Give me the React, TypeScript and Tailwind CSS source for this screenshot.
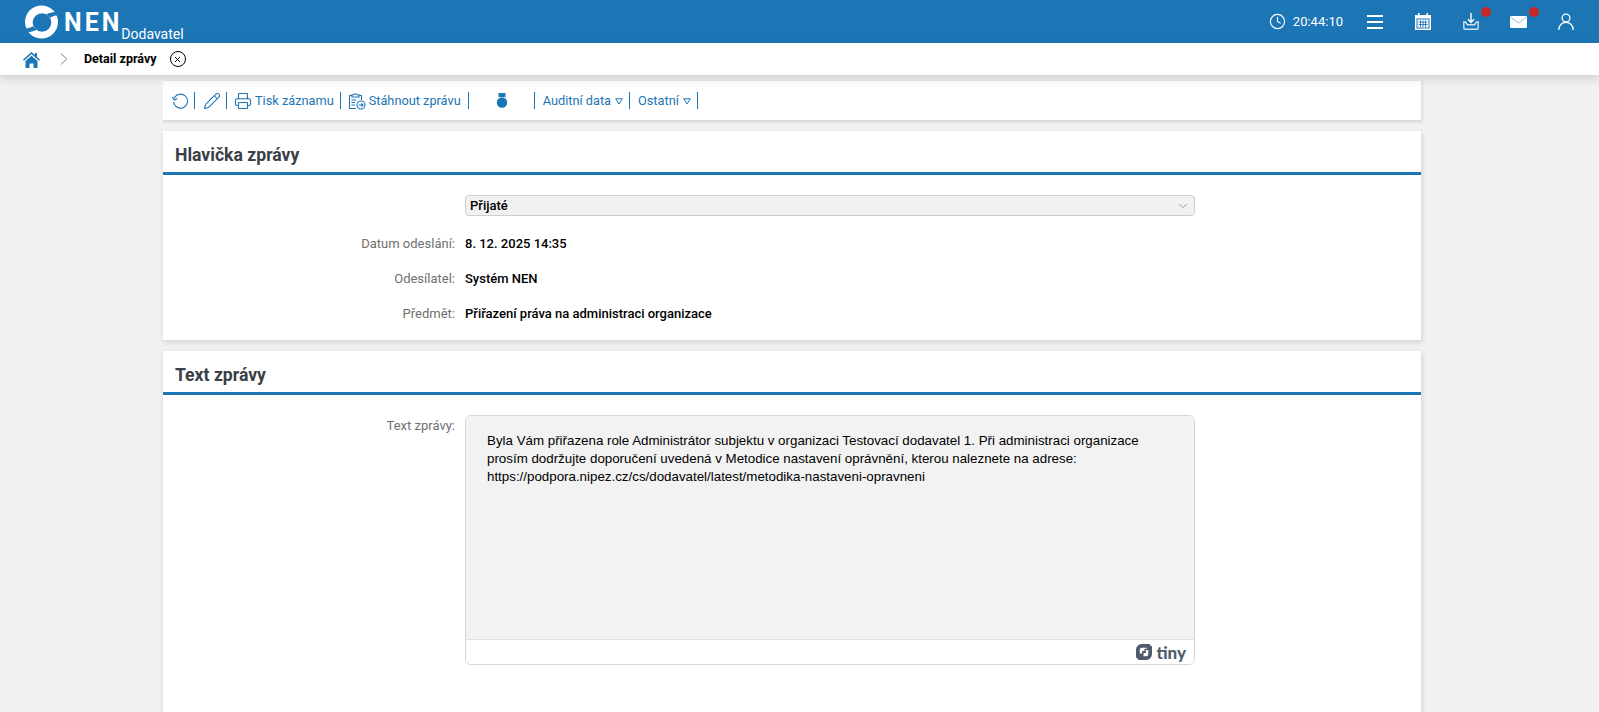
import React from 'react'
import { Clock, Pencil, Printer, ChevronDown, X } from 'lucide-react'

const FONT = 'font-["Roboto",sans-serif]'

function Sep() {
  return <span className="mx-[5px] h-[17px] w-px bg-[#1c75b5]" />
}

function Caret() {
  return (
    <svg width="8" height="7" viewBox="0 0 8 7" className="ml-[4px] mr-px mt-px">
      <path d="M.7.8h6.6L4 6z" fill="none" stroke="#1c75b5" strokeWidth="1" />
    </svg>
  )
}

function Logo() {
  return (
    <svg width="33" height="34" viewBox="0 0 34 34">
      <circle cx="17" cy="17" r="17" fill="#fff" />
      <circle cx="17.5" cy="17.5" r="9.6" fill="#1c75b5" />
      <path d="M36 7C31 6 26 7 22 9L26 12.5C29 10.5 32 10 36 10.5Z" fill="#1c75b5" />
      <path d="M-2 27C3 28 8 27 12 25L8 21.5C5 23.5 2 24 -2 23.5Z" fill="#1c75b5" />
    </svg>
  )
}

function Header() {
  return (
    <header className="flex h-[43px] items-center bg-[#1c75b5] text-white">
      <div className="ml-[25px] flex items-center">
        <Logo />
        <span className="ml-[6px] mt-px text-[25px] font-bold leading-none tracking-[3px]">NEN</span>
        <span className="-ml-px mt-[24px] text-[14px] leading-none">Dodavatel</span>
      </div>
      <div className="ml-auto flex items-center">
        <Clock className="h-[17px] w-[17px]" strokeWidth={1.6} />
        <span className="ml-[7px] text-[13px]">20:44:10</span>
        <svg width="16" height="14" viewBox="0 0 16 14" className="ml-[24px]">
          <path d="M0 0h16v2H0zM0 6h16v2H0zM0 12h16v2H0z" fill="#fff" />
        </svg>
        <svg width="16" height="17" viewBox="0 0 16 17" className="ml-[32px]">
          <path d="M0 2h16v15H0z M3 0h1.6v4H3z M11.4 0H13v4h-1.6z" fill="#fff" />
          <path d="M1.5 5.5h13v10h-13z" fill="#1c75b5" />
          <path d="M2.5 6.5h11v8h-11z" fill="#fff" />
          <path d="M3.5 9h9M3.5 11.5h9M5.5 7.5v6.5M8 7.5v6.5M10.5 7.5v6.5" stroke="#1c75b5" strokeWidth=".9" />
        </svg>
        <div className="relative ml-[32px] h-[17px] w-[16px]">
          <svg width="16" height="17" viewBox="0 0 16 17" fill="none" strokeWidth="1.4">
            <path d="M8 0v9M5 6.2 8 9.4l3-3.2" stroke="#fff" />
            <path d="M2.6 9H.8v6c0 .8.6 1.3 1.3 1.3h11.8c.7 0 1.3-.5 1.3-1.3V9h-1.8l-1.8 2.8H4.4z" stroke="#cfe3f2" />
          </svg>
          <span className="absolute left-[18px] top-[-6px] h-[10px] w-[10px] rounded-full bg-[#c62828]" />
        </div>
        <div className="relative ml-[31px] h-[12px] w-[17px]">
          <svg width="17" height="12" viewBox="0 0 17 12" className="block">
            <rect width="17" height="12" rx="1.2" fill="#fff" />
            <path d="M.5 1 8.5 7 16.5 1" fill="none" stroke="#8fbfe0" strokeWidth="1" />
          </svg>
          <span className="absolute left-[19px] top-[-9px] h-[10px] w-[10px] rounded-full bg-[#c62828]" />
        </div>
        <svg width="16" height="17" viewBox="0 0 16 17" fill="none" stroke="#fff" strokeWidth="1.3" className="ml-[31px] mr-[25px]">
          <circle cx="8" cy="5" r="3.9" />
          <path d="M.8 17c0-4.4 3-7.6 7.2-7.6s7.2 3.2 7.2 7.6" />
        </svg>
      </div>
    </header>
  )
}

function Breadcrumb() {
  return (
    <nav className="relative z-10 flex h-[32px] items-center bg-white shadow-[0_3px_10px_rgba(0,0,0,0.16)]">
      <svg width="17" height="17" viewBox="0 0 17 17" className="ml-[23px]">
        <path d="M8.5 1 0 8.6l1 1.1 7.5-6.6L16 9.7l1-1.1-3-2.7V2h-2v2.1z" fill="#1c75b5" />
        <path d="M2.5 10 8.5 4.7 14.5 10v7h-4v-4.5h-4V17h-4z" fill="#1c75b5" />
      </svg>
      <svg width="8" height="12" viewBox="0 0 8 12" fill="none" stroke="#6f8190" strokeWidth="1" className="ml-[20px]">
        <path d="M.8.5 6.8 6l-6 5.5" />
      </svg>
      <span className="ml-[16px] text-[12.5px] font-bold text-black">Detail zprávy</span>
      <span className="ml-[13px] flex h-[16px] w-[16px] items-center justify-center rounded-full border-[1.4px] border-black">
        <X className="h-[9px] w-[9px] text-black" strokeWidth={2.6} />
      </span>
    </nav>
  )
}

function Toolbar() {
  return (
    <div className="flex h-[41px] items-center border-b-2 border-[#dcdcdc] bg-white pl-[9px] text-[12.75px] text-[#1c75b5] shadow-[2px_0_3px_rgba(0,0,0,0.08)]">
      <svg width="17" height="17" viewBox="0 0 17 17" fill="none" stroke="#1c75b5" strokeWidth="1.1">
        <path d="M2.2 6.2A7 7 0 1 1 1.6 10" />
        <path d="M.4 4.8 2.2 8 5.4 6.4" />
      </svg>
      <Sep />
      <Pencil className="ml-[3px] h-[18px] w-[18px]" strokeWidth={1.4} />
      <Sep />
      <Printer className="ml-[2px] h-[18px] w-[18px]" strokeWidth={1.5} />
      <span className="ml-[3px] mr-px">Tisk záznamu</span>
      <Sep />
      <svg width="18" height="18" viewBox="0 0 18 18" fill="none" stroke="#1c75b5" strokeWidth="1.1" className="ml-[2px]">
        <path d="M8 16.5H1.5V3.5H4M11 3.5h2.5V8" />
        <path d="M4 5V2.8h2C6.2 1.4 8.8 1.4 9 2.8h2V5z" />
        <path d="M3.5 8H8M3.5 10.5H7M3.5 13H7" />
        <circle cx="13" cy="13" r="4" />
        <path d="M10.8 13h4.2M13.4 11.3 15 13l-1.6 1.7" />
      </svg>
      <span className="ml-[3px] mr-[2px]">Stáhnout zprávu</span>
      <Sep />
      <svg width="12" height="15" viewBox="0 0 12 15" className="ml-[22px] mr-[21px]">
        <path d="M2.5 0h7v4h-7z" fill="#1c75b5" />
        <circle cx="6" cy="9.5" r="5.2" fill="#1c75b5" />
      </svg>
      <Sep />
      <span className="ml-[3px]">Auditní data</span>
      <Caret />
      <Sep />
      <span className="ml-[3px]">Ostatní</span>
      <Caret />
      <Sep />
    </div>
  )
}

function Title({ children }: { children: React.ReactNode }) {
  return (
    <h2 className="flex h-[44px] items-center border-b-[3px] border-[#1c75b5] pl-[12px] pt-[8px] text-[17.6px] font-bold text-[#3a3f47]">
      {children}
    </h2>
  )
}

function Row({ label, value }: { label: string; value: string }) {
  return (
    <div className="grid h-[35px] grid-cols-[292px_1fr] items-center gap-x-[10px] text-[13px]">
      <span className="text-right text-[#6f6f6f]">{label}</span>
      <span className="font-medium text-black">{value}</span>
    </div>
  )
}

export default function App() {
  return (
    <div className={`${FONT} h-[712px] overflow-hidden bg-[#f1f1f1]`}>
      <Header />
      <Breadcrumb />
      <main className="ml-[163px] mr-[178px] flex flex-col">
        <div className="mt-[6px]">
          <Toolbar />
        </div>
        <section className="mt-[9px] h-[209px] bg-white shadow-[1px_2px_5px_rgba(0,0,0,0.14)]">
          <Title>Hlavička zprávy</Title>
          <div className="grid grid-cols-[291px_730px] gap-x-[11px] pt-[20px]">
            <span />
            <div className="flex h-[21px] items-center justify-between rounded-[4px] border border-[#cfcfcf] bg-[#f1f1f1] pl-[4px] pr-[4px] text-[13px] font-medium text-black">
              Přijaté
              <ChevronDown className="h-[14px] w-[14px] text-[#8f8f8f]" strokeWidth={1.5} />
            </div>
          </div>
          <div className="mt-[10px]">
            <Row label="Datum odeslání:" value="8. 12. 2025 14:35" />
            <Row label="Odesílatel:" value="Systém NEN" />
            <Row label="Předmět:" value="Přiřazení práva na administraci organizace" />
          </div>
        </section>
        <section className="mt-[11px] h-[400px] bg-white shadow-[1px_2px_5px_rgba(0,0,0,0.14)]">
          <Title>Text zprávy</Title>
          <div className="grid grid-cols-[292px_730px] gap-x-[10px] pt-[20px]">
            <span className="pt-px text-right text-[13px] text-[#6f6f6f]">Text zprávy:</span>
            <div className="flex h-[250px] flex-col overflow-hidden rounded-[6px] border border-[#d6d6d6]">
              <div className='flex-1 bg-[#f2f2f2] px-[21px] pt-[16px] font-["Liberation_Sans",Arial,sans-serif] text-[13.33px] leading-[18px] text-black'>
                <p>Byla Vám přiřazena role Administrátor subjektu v organizaci Testovací dodavatel 1. Při administraci organizace</p>
                <p>prosím dodržujte doporučení uvedená v Metodice nastavení oprávnění, kterou naleznete na adrese:</p>
                <p>https://podpora.nipez.cz/cs/dodavatel/latest/metodika-nastaveni-opravneni</p>
              </div>
              <div className="flex h-[25px] items-center justify-end border-t border-[#e0e0e0] bg-white pr-[8px]">
                <svg width="16" height="16" viewBox="0 0 17 17">
                  <path fillRule="evenodd" d="M6 0h8l3 3v8a6 6 0 0 1-6 6H3l-3-3V6a6 6 0 0 1 6-6ZM6 4a2 2 0 0 0-2 2v4h2.5V7.5H9V5h2.5V4ZM13 6.5h-2.5V9.5H8V13h3a2 2 0 0 0 2-2Z" fill="#4f5b6b" />
                </svg>
                <span className='ml-[4px] font-["Lato",sans-serif] text-[17px] font-black leading-none text-[#4f5b6b]'>tiny</span>
              </div>
            </div>
          </div>
        </section>
      </main>
    </div>
  )
}
